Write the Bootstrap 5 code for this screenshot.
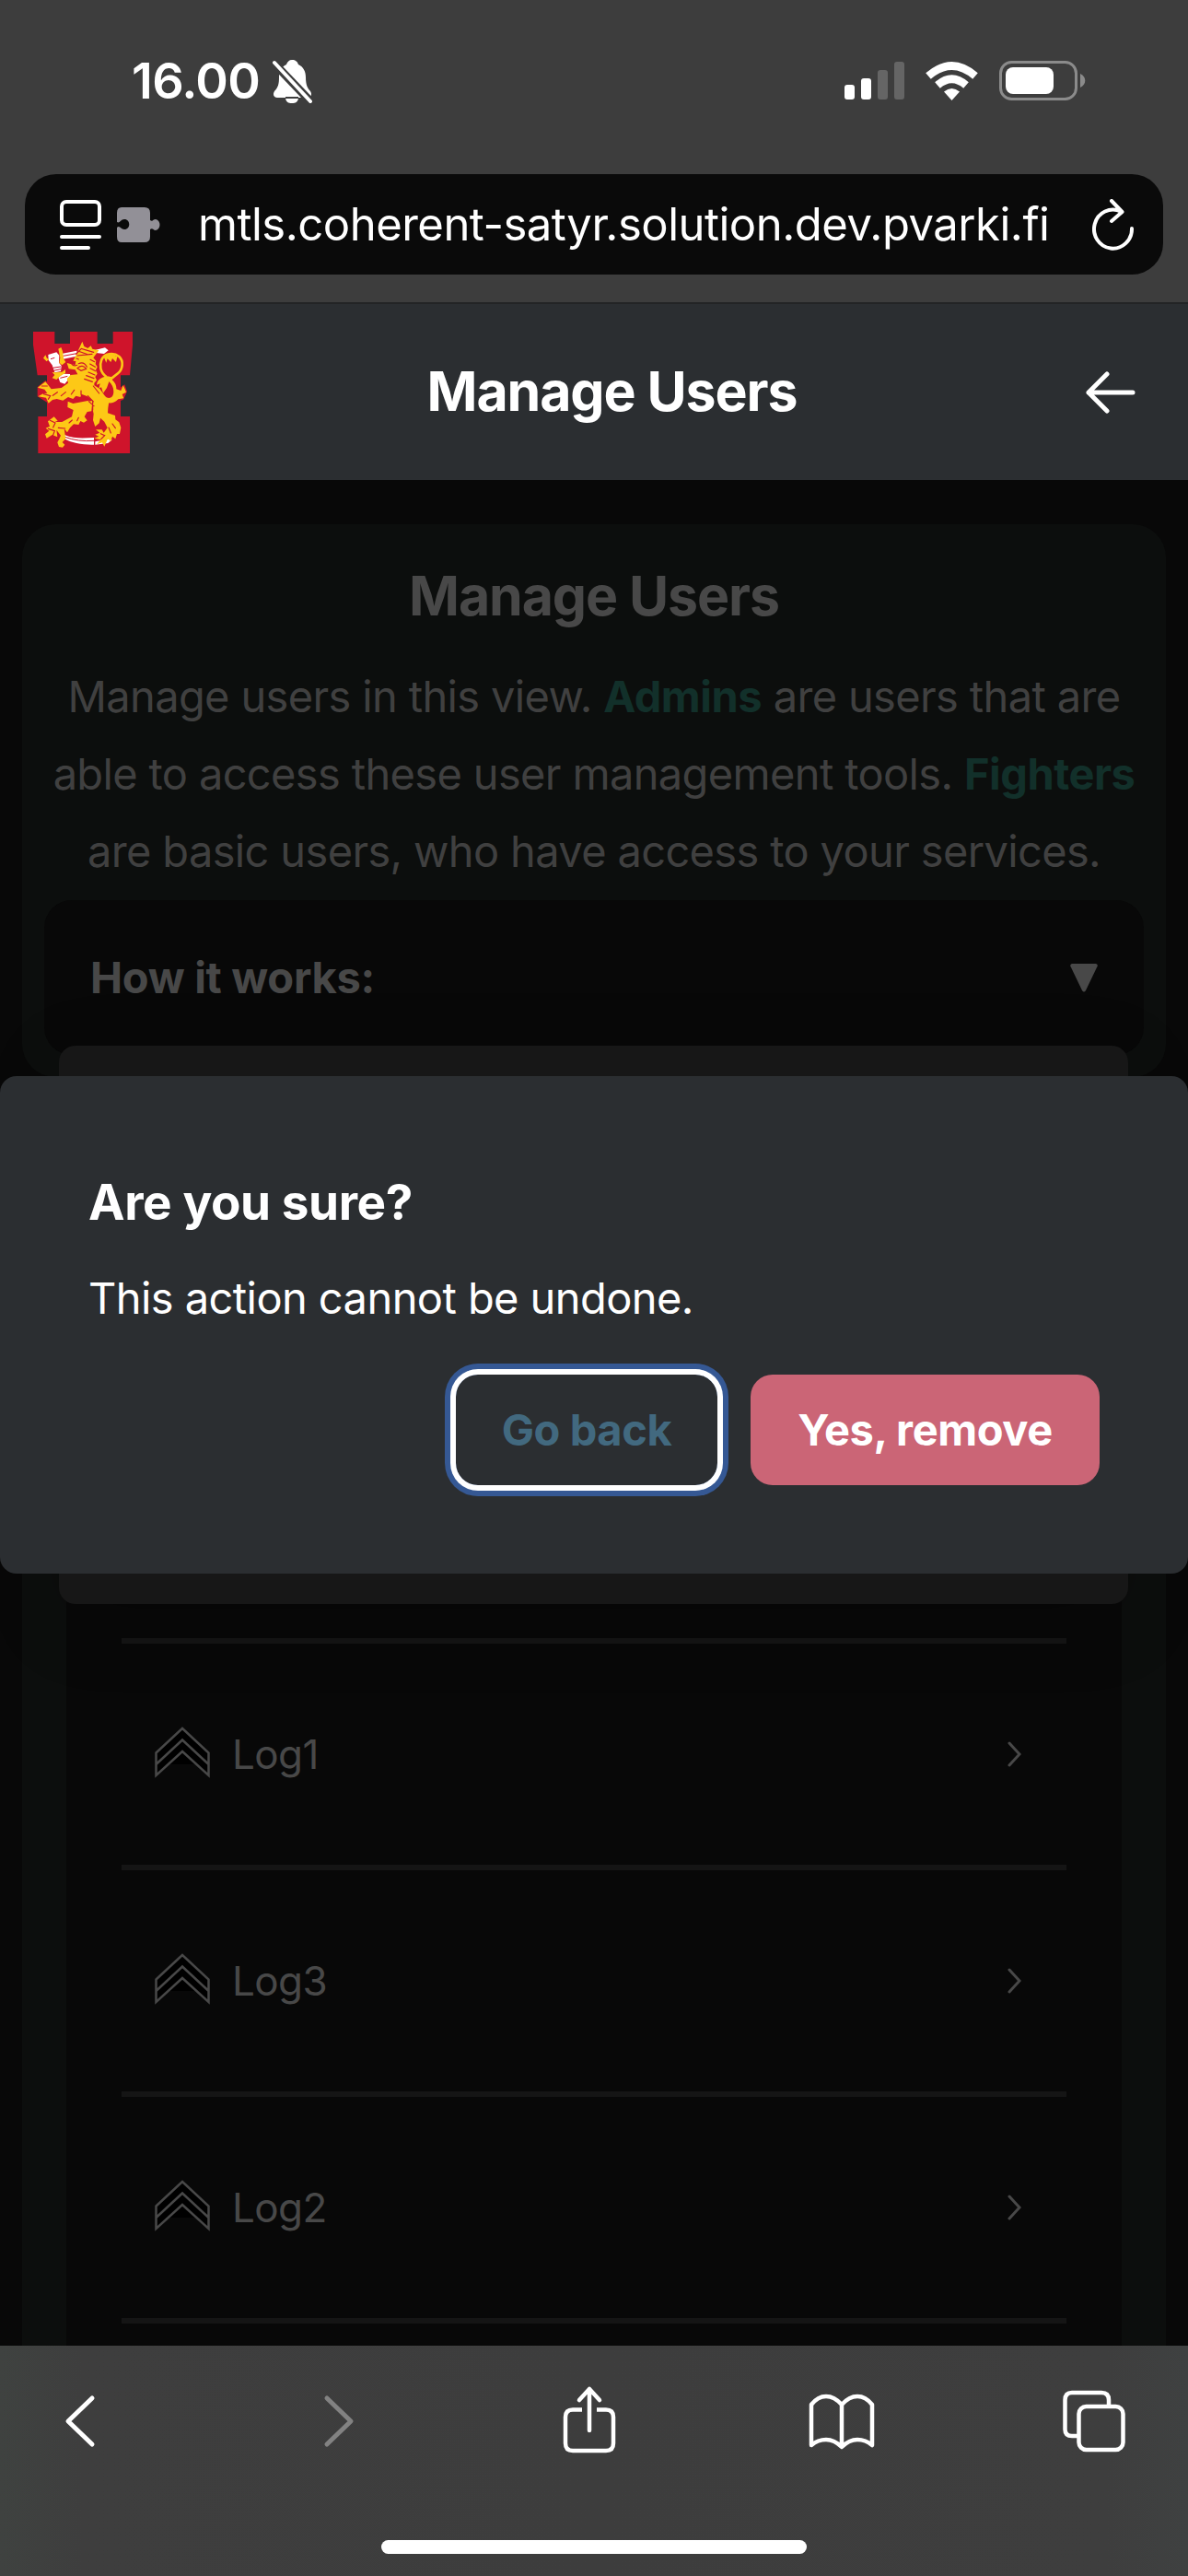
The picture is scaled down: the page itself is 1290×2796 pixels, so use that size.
<!DOCTYPE html>
<html lang="en" data-bs-theme="dark">
<head>
<meta charset="utf-8">
<meta name="viewport" content="width=device-width, initial-scale=1">
<title>Manage Users</title>
<link href="https://cdn.jsdelivr.net/npm/bootstrap@5.3.0/dist/css/bootstrap.min.css" rel="stylesheet">
<style>
  html, body { width: 1290px; height: 2796px; overflow: hidden; }
  body { background: #080808; font-family: Inter, "Liberation Sans", sans-serif; color: #fff; }
  svg { display: block; flex: none; }
  .chrome-top { height: 328px; background: #3d3d3d; }
  .status { height: 189px; padding: 0 111px 14px 143px; }
  .clock { font-size: 54px; font-weight: 600; letter-spacing: -.7px; line-height: 1; width: 153px; }
  .status-icons { gap: 23px; }
  .address { height: 109px; margin: 0 27px; padding: 0 31px 0 38px; border-radius: 34px; background: #0a0a0a; }
  .url { font-size: 49px; letter-spacing: -.5px; line-height: 1; margin-left: 41px; }
  .app-head { height: 193px; background: #2b2e31; border-top: 2px solid #232425; padding: 0 57px 0 36px; }
  .app-title { font-size: 59px; font-weight: 700; letter-spacing: -1.1px; padding-left: 6px; }
  .page { padding: 48px 24px 0; background: #080808; }
  .panel { background: #0c0e0d; border-radius: 36px; color: #444; }
  .intro { padding: 42px 24px 24px; }
  .intro h2 { font-size: 59px; font-weight: 700; letter-spacing: -1.1px; line-height: 72px; margin: 0 0 31px; color: #484848; }
  .intro p { font-size: 47px; letter-spacing: -.65px; line-height: 84px; margin: 0 -20px 11px; color: #404040; }
  .intro b { color: #12302a; font-weight: 700; letter-spacing: -.5px; }
  .how { height: 168px; padding: 0 50px; border-radius: 30px; background: #080808; font-size: 47px; font-weight: 700; letter-spacing: -.3px; color: #484848; }
  .people { margin-top: 24px; padding: 60px 48px 0; height: 1600px; }
  .people-list { background: #080808; padding: 525px 60px 0; height: 1500px; }
  .person { height: 246px; border-top: 6px solid #151515; padding: 0 49px 0 36px; font-size: 44px; letter-spacing: -.6px; color: #484848; }
  .name { margin-left: 24px; }
  .sheet-behind { position: absolute; left: 64px; top: 614px; width: 1161px; height: 606px; border-radius: 18px; background: #171717; box-shadow: 0 20px 80px rgba(0,0,0,.2); }
  .confirm { position: absolute; left: 0; right: 0; top: 647px; height: 540px; padding: 96px; border-radius: 18px; background: #2b2e31; }
  .confirm h3 { font-size: 53px; font-weight: 700; line-height: 82px; margin: 0 0 21px; letter-spacing: -.4px; }
  .confirm p { font-size: 47px; line-height: 84px; margin: 0 0 41px; letter-spacing: -.57px; }
  .act { height: 120px; border: 0; border-radius: 24px; font-size: 47px; font-weight: 700; letter-spacing: -.4px; padding: 0; }
  .act-back { width: 284px; color: #42697f; box-shadow: 0 0 0 6px #fff, 0 0 0 12px #355894; }
  .act-yes { width: 379px; color: #fff; background: #cb6576; }
  .chrome-bottom { height: 250px; background: linear-gradient(90deg, #3f4240 0, #3e3e3e 90px, #3d3d3d 50%, #3e3e3e 1200px, #3f4141 100%); padding: 43px 0 24px; }
  .tools { padding: 0 65px 0 50px; }
  .home { width: 462px; height: 15px; border-radius: 8px; background: #fff; }
</style>
</head>
<body class="d-flex flex-column">
<div class="chrome-top flex-shrink-0">
  <div class="status d-flex align-items-center">
    <div class="clock">16.00</div>
    <svg width="43" height="48" viewBox="0 0 43 48">
      <path fill="#fff" d="M21 1c4 0 6 2 7 5 6 3 8 8 8 14 0 8 2 12 5 15 2 3 1 7-3 7H5c-4 0-5-4-3-7 4-4 5-8 5-15C7 13 9 9 15 6c1-3 3-5 6-5ZM14 43h14c-1 4-3 5-7 5s-6-1-7-5Z"/>
      <path d="M14 42H28" stroke="#3d3d3d" stroke-width="2"/>
      <path d="M2 5 41 46" stroke="#3d3d3d" stroke-width="9"/>
      <path d="M2 4 41 46" stroke="#fff" stroke-width="4" stroke-linecap="round"/>
    </svg>
    <div class="status-icons d-flex align-items-center ms-auto">
      <svg width="65" height="42" viewBox="0 0 65 42"><g fill="#fff"><rect y="25" width="11" height="16" rx="3"/><rect x="18" y="18" width="11" height="23" rx="3"/></g><g fill="#656565"><rect x="36" y="9" width="11" height="32" rx="3"/><rect x="54" width="11" height="41" rx="3"/></g></svg>
      <svg width="57" height="42" viewBox="0 0 57 42"><g fill="none" stroke="#fff"><path d="M3 15.500Q28.500-6.500 54 15.500" stroke-width="8.500"/><path d="M13 25.500Q28.500 12 44 25.500" stroke-width="8.500"/></g><path fill="#fff" d="M20 32.500Q28.500 25.500 37 32.500L28.500 42Z"/></svg>
      <svg width="94" height="43" viewBox="0 0 94 43"><rect x="1.500" y="1.500" width="82" height="40" rx="12" fill="none" stroke="#8b8b8b" stroke-width="3"/><rect x="7" y="7" width="52" height="29" rx="8" fill="#fff"/><path fill="#8b8b8b" d="M88 14c7 3 7 12 0 15Z"/></svg>
    </div>
  </div>
  <div class="address d-flex align-items-center">
    <svg width="45" height="54" viewBox="0 0 45 54" fill="none" stroke="#fff" stroke-width="4" stroke-linecap="round"><rect x="2" y="2" width="41" height="25" rx="5"/><path d="M2 40H43M2 52H31"/></svg>
    <svg class="ms-3" width="48" height="38" viewBox="0 0 48 38"><path fill="#929097" d="M6 0H31Q37 0 37 6V14C40 16 40 13 43 13C49 14 49 24 43 25C40 25 40 22 37 24V32Q37 38 31 38H6Q1 38 1 32V22C4 19 5 24 9 24C16 24 16 13 9 13C5 13 4 18 1 16V6Q1 0 6 0Z"/></svg>
    <div class="url text-nowrap">mtls.coherent-satyr.solution.dev.pvarki.fi</div>
    <svg class="ms-auto" width="46" height="56" viewBox="0 0 46 56" fill="none" stroke="#fff" stroke-width="4" stroke-linecap="round" stroke-linejoin="round"><path d="M43 32A20.500 21 0 1 1 31 13.500M21 2 32.500 14 21 24"/></svg>
  </div>
</div>

<header class="app-head d-flex align-items-center flex-shrink-0">
  <svg width="108" height="132" viewBox="108 117 324 396">
    <path fill="#cf142b" d="M108 117H178V156H228V117H317V156H368V117H432V160L423 259H393V393H423V513H124V393H153V259H122L108 160Z"/>
    <path fill="#cf142b" d="M122 297 148 276 170 295 158 350 122 328ZM390 300 406 289 414 312 402 338 385 345Z"/>
    <g fill="#fff"><path d="M204 188 250 179V197L206 206ZM306 178 342 169 353 178 339 189 306 185Z"/><path d="M157 192 184 184 193 194 192 218 200 228 198 246 178 250 170 226 158 210ZM190 266 205 254 228 255 230 266 220 276 211 287 196 282Z"/><path d="M210 453C240 466 270 464 306 462V485C270 486 232 479 208 465ZM310 475 355 466 365 469 352 480 310 485Z"/></g>
    <g fill="none" stroke="#cf142b" stroke-width="3"><path d="M206 196 250 188M165 206 178 202M172 235 198 231M174 244 198 239M196 268 220 262M211 460Q255 476 306 472"/></g>
    <g fill="#fdc816">
      <path d="M268 149 274 165 286 171 296 163 301 173 322 178 313 190 304 202 313 212 311 222 317 232 312 242 317 254 310 264 315 275 307 284 307 292 325 303 340 324 355 345 352 365 351 382 375 390 376 403 388 412 394 430 390 450 381 450 376 466 366 458 361 474 351 466 340 491 333 478 315 484 328 469 307 464 322 458 310 452 325 446 312 436 332 436 338 446 350 430 340 410 327 398 323 415 310 426 303 405 305 385 300 360 289 345 301 341 285 328 265 320 262 330 247 326 238 336 222 330 205 341 185 336 171 339 158 350 150 332 124 328 142 318 154 317 145 305 123 299 148 280 157 291 167 304 200 300 222 284 218 270 230 258 253 256 245 241 224 238 218 219 245 226 247 213 238 212 247 195Z"/>
      <path d="M221 344 238 351 290 341 300 351 298 376 284 378 275 394 284 406 273 413 262 408 256 420 240 418 228 430 219 445 209 433 214 466 203 477 211 485 204 494 192 492 187 478 194 464 198 455 184 437 187 460 170 453 152 464 147 451 160 440 149 431 162 425 156 409 176 394 188 407 178 411 202 411 234 394 239 372 220 363Z"/>
      <path d="M141 203 148 193 153 204 160 206 152 214ZM190 173 199 168 204 181 207 205 214 216 202 226 193 218 196 202ZM170 249 182 250 202 248 213 240 213 252 198 260 184 273 170 268 178 258Z"/>
      <path d="M350 262C328 265 316 276 315 290L326 286 322 302 330 298 336 317 348 300 355 280 372 266Z"/>
      <path d="M338 325C352 338 370 335 370 312C370 298 365 288 354 278L364 272C376 283 380 293 379 304L394 309 401 292 407 304 411 314 398 321 403 334 385 337C372 352 357 350 345 348Z"/>
    </g>
    <path d="M347 264C325 250 324 225 331 208C340 188 370 184 388 198C404 213 400 240 384 253L356 275" fill="none" stroke="#fdc816" stroke-width="8"/>
    <path fill="#fdc816" d="M338 199 346 218 350 205 361 216 366 204 378 216 382 199 360 188Z"/>
    <g fill="none" stroke="#cf142b" stroke-width="3.500" stroke-linecap="round"><path d="M248 190 265 172 305 184M252 195 300 190M254 180 288 192M249 204 256 207M256 221Q274 213 283 232M252 236Q269 221 281 238L264 244ZM231 219Q239 232 251 226M294 208 308 215M293 222 310 232M294 236 311 245M288 249 309 258M281 260 306 269M275 271 301 280M304 294 323 318M286 326 304 345M289 344 306 359M136 294 154 294M142 320 164 326 157 337M172 325 187 314M199 326 214 314M232 321 242 307M264 309V322M302 345 302 372M366 417 376 431M354 429 361 447M328 449 341 455 329 467M163 406 180 414 173 429M157 433 178 440 172 456M190 430 212 432M225 414 235 405M251 407 256 397"/></g>
  </svg>
  <div class="app-title flex-fill text-center">Manage Users</div>
  <svg width="54" height="46" viewBox="0 0 54 46" fill="none" stroke="#fff" stroke-width="5" stroke-linecap="round" stroke-linejoin="round"><path d="M51 23H3M23 3 3 23 23 43"/></svg>
</header>

<main class="page flex-fill overflow-hidden position-relative">
  <section class="panel intro text-center">
    <h2>Manage Users</h2>
    <p>Manage users in this view. <b>Admins</b> are users that are<br>able to access these user management tools. <b>Fighters</b><br>are basic users, who have access to your services.</p>
    <div class="how d-flex align-items-center justify-content-between">
      <span>How it works:</span>
      <svg width="30" height="31" viewBox="0 0 30 31"><path fill="#484848" d="M2 0H28Q31 1 29 4L17 29Q15 32 13 29L1 4Q-1 1 2 0Z"/></svg>
    </div>
  </section>
  <section class="panel people">
    <div class="people-list">
      <div class="person d-flex align-items-center"><svg class="mb-1" width="60" height="56" viewBox="0 0 60 56" fill="#000" stroke="#484848" stroke-width="2.500"><path d="M1.500 28.500 30 2 58.500 28.500V53L30 27 1.500 53ZM1.500 41 30 14.500 58.500 41"/></svg><span class="name">Log1</span><svg class="ms-auto" width="15" height="28" viewBox="0 0 15 28" fill="none" stroke="#484848" stroke-width="3" stroke-linecap="round"><path d="M2 2 13 14 2 26"/></svg></div>
      <div class="person d-flex align-items-center"><svg class="mb-1" width="60" height="56" viewBox="0 0 60 56" fill="#000" stroke="#484848" stroke-width="2.500"><path d="M1.500 28.500 30 2 58.500 28.500V53L30 27 1.500 53ZM1.500 41 30 14.500 58.500 41"/></svg><span class="name">Log3</span><svg class="ms-auto" width="15" height="28" viewBox="0 0 15 28" fill="none" stroke="#484848" stroke-width="3" stroke-linecap="round"><path d="M2 2 13 14 2 26"/></svg></div>
      <div class="person d-flex align-items-center"><svg class="mb-1" width="60" height="56" viewBox="0 0 60 56" fill="#000" stroke="#484848" stroke-width="2.500"><path d="M1.500 28.500 30 2 58.500 28.500V53L30 27 1.500 53ZM1.500 41 30 14.500 58.500 41"/></svg><span class="name">Log2</span><svg class="ms-auto" width="15" height="28" viewBox="0 0 15 28" fill="none" stroke="#484848" stroke-width="3" stroke-linecap="round"><path d="M2 2 13 14 2 26"/></svg></div>
      <div class="person"></div>
    </div>
  </section>
  <div class="sheet-behind"></div>
  <div class="confirm" role="dialog">
    <h3>Are you sure?</h3>
    <p>This action cannot be undone.</p>
    <div class="d-flex justify-content-end" style="gap:36px">
      <button class="btn act act-back text-nowrap">Go back</button>
      <button class="btn act act-yes text-nowrap">Yes, remove</button>
    </div>
  </div>
</main>

<footer class="chrome-bottom d-flex flex-column justify-content-between align-items-center flex-shrink-0">
  <div class="tools d-flex justify-content-between align-items-center w-100">
    <svg width="74" height="78" viewBox="-20 0 74 78" fill="none" stroke="#fff" stroke-width="5" stroke-linecap="round" stroke-linejoin="round"><path d="M30 14 4 39 30 64"/></svg>
    <svg width="74" height="78" viewBox="-26 0 74 78" fill="none" stroke="#828282" stroke-width="5" stroke-linecap="round" stroke-linejoin="round"><path d="M4 14 30 39 4 64"/></svg>
    <svg width="74" height="78" viewBox="-10 0 74 78" fill="none" stroke="#fff" stroke-width="4.500" stroke-linecap="round" stroke-linejoin="round"><path stroke-linecap="butt" d="M21 26.500H11Q3 26.500 3 34.500V63Q3 71 11 71H47Q55 71 55 63V34.500Q55 26.500 47 26.500H37"/><path d="M29 49V4M18 16 29 4 40 16"/></svg>
    <svg width="74" height="78" viewBox="-2 0 74 78" fill="none" stroke="#fff" stroke-width="4.500" stroke-linejoin="round"><path d="M36 21Q28 12 19 12T3 21V65Q10 59 19 59T36 67Q44 59 53 59T69 65V21Q62 12 53 12T36 21V67"/></svg>
    <svg width="74" height="78" viewBox="-3 0 74 78" fill="none" stroke="#fff" stroke-width="4.500"><rect x="17.500" y="23" width="48" height="47" rx="8"/><path d="M50 22V16Q50 8 42 8H10Q2.500 8 2.500 16V48Q2.500 55 10 55H17"/></svg>
  </div>
  <div class="home"></div>
</footer>
<script src="https://cdn.jsdelivr.net/npm/bootstrap@5.3.0/dist/js/bootstrap.bundle.min.js"></script>
</body>
</html>
